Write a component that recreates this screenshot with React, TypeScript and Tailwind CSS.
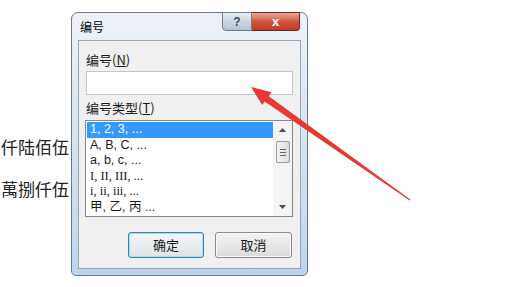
import React from 'react';

const cjk = "font-['Liberation_Sans','Noto_Sans_CJK_SC',sans-serif]";

const rows: { label: string; serif?: boolean }[] = [
  { label: '1, 2, 3, ...' },
  { label: 'A, B, C, ...' },
  { label: 'a, b, c, ...' },
  { label: 'I, II, III, ...', serif: true },
  { label: 'i, ii, iii, ...', serif: true },
  { label: '甲, 乙, 丙 ...' },
];

const ListBox: React.FC = () => (
  <div className="mt-[4px] -ml-[1px] w-[208px] h-[97px] border border-[#828790] bg-white flex">
    <div className="flex-1 pt-[1px] pl-[1px]">
      {rows.map((r, i) => (
        <div
          key={i}
          className={`h-[15.5px] leading-[15.5px] pl-[3px] text-[12.5px] whitespace-nowrap ${
            i === 0 ? 'bg-[#3399ff] text-white' : 'text-[#1a1a1a]'
          } ${
            r.serif
              ? "font-['Liberation_Serif','Noto_Sans_CJK_SC',serif]"
              : "font-['Liberation_Sans','Noto_Sans_CJK_SC',sans-serif]"
          }`}
        >
          {r.label}
        </div>
      ))}
    </div>
    <div className="w-[19px] bg-[#f4f4f4] flex flex-col items-center">
      <div className="h-[18px] flex items-center justify-center">
        <svg width="7" height="4" viewBox="0 0 7 4">
          <path d="M0 4 L3.5 0 L7 4 Z" fill="#4a4a4a" />
        </svg>
      </div>
      <div className="mt-[2px] w-[14px] h-[22px] rounded-[2px] border border-[#9a9a9a] bg-gradient-to-r from-[#f4f4f4] to-[#dcdcdc] flex flex-col items-center justify-center gap-[2px]">
        <div className="w-[6px] h-[1px] bg-[#666]" />
        <div className="w-[6px] h-[1px] bg-[#666]" />
        <div className="w-[6px] h-[1px] bg-[#666]" />
      </div>
      <div className="flex-1" />
      <div className="h-[18px] flex items-center justify-center">
        <svg width="7" height="4" viewBox="0 0 7 4">
          <path d="M0 0 L3.5 4 L7 0 Z" fill="#4a4a4a" />
        </svg>
      </div>
    </div>
  </div>
);

const App: React.FC = () => {
  return (
    <div className={`relative w-[528px] h-[287px] bg-white overflow-hidden flex ${cjk}`}>
      <div className="w-[71px] flex flex-col pt-[137px] gap-[22px] text-[17px] leading-[20px] text-[#222] whitespace-nowrap font-['Noto_Sans_CJK_SC',sans-serif]">
        <div className="pl-[1px]">仟陆佰伍</div>
        <div className="pl-[1px]">萬捌仟伍</div>
      </div>

      <div className="mt-[12px] w-[237px] h-[264px] border border-[#6b7888] rounded-t-[7px] rounded-b-[5px] bg-gradient-to-b from-[#eef2f7] via-[#d6e3f1] to-[#bed4ec] px-[6px] pb-[6px] flex flex-col">
        <div className="h-[27px] flex justify-between items-start">
          <div className="pt-[6px] pl-[2px] text-[12px] leading-[16px] text-black font-['Noto_Sans_CJK_SC',sans-serif]">编号</div>
          <div className="-mt-[1px] mr-[1px] flex">
            <div className="w-[30px] h-[19px] border border-[#6f7d8c] rounded-bl-[4px] bg-gradient-to-b from-[#e6ebf1] to-[#b5c3d2] flex items-center justify-center text-[12px] font-bold text-[#3d4a5a] leading-none">
              ?
            </div>
            <div className="w-[48px] h-[19px] border border-l-0 border-[#6b2b22] rounded-br-[4px] bg-gradient-to-b from-[#e9a99a] via-[#d2553f] to-[#c23b25] flex items-center justify-center text-[13px] font-bold text-white leading-none">
              x
            </div>
          </div>
        </div>

        <div className="flex-1 border border-[#98a5b4] bg-[#f0f0f0] px-[7px] pt-[11px] flex flex-col font-['Noto_Sans_CJK_SC',sans-serif] text-[13px] text-[#1a1a1a]">
          <div className="leading-[16px]">
            编号(<span className="underline">N</span>)
          </div>
          <div className="mt-[3px] w-[207px] h-[24px] border border-[#c3c7cc] bg-white" />
          <div className="mt-[5px] leading-[16px]">
            编号类型(<span className="underline">T</span>)
          </div>
          <ListBox />
          <div className="mt-[15px] pr-[1px] flex justify-end gap-[11px]">
            <div className="w-[76px] h-[26px] rounded-[3px] border border-[#3c7fb1] shadow-[inset_0_0_0_1px_#a7dcf6] bg-gradient-to-b from-[#f4f7f9] to-[#dfe3e6] flex items-center justify-center text-[13px]">
              确定
            </div>
            <div className="w-[77px] h-[26px] rounded-[3px] border border-[#8a8a8a] shadow-[inset_0_0_0_1px_#fbfbfb] bg-gradient-to-b from-[#f4f4f4] to-[#dcdcdc] flex items-center justify-center text-[13px]">
              取消
            </div>
          </div>
        </div>
      </div>

      <svg className="absolute left-0 top-0 pointer-events-none" width="528" height="287" viewBox="0 0 528 287">
        <polygon
          points="251,87 271.5,92.2 268.8,96.2 410.3,199.6 409.7,200.4 264.6,101.4 262.2,105"
          fill="#e8382f"
        />
      </svg>
    </div>
  );
};

export default App;
